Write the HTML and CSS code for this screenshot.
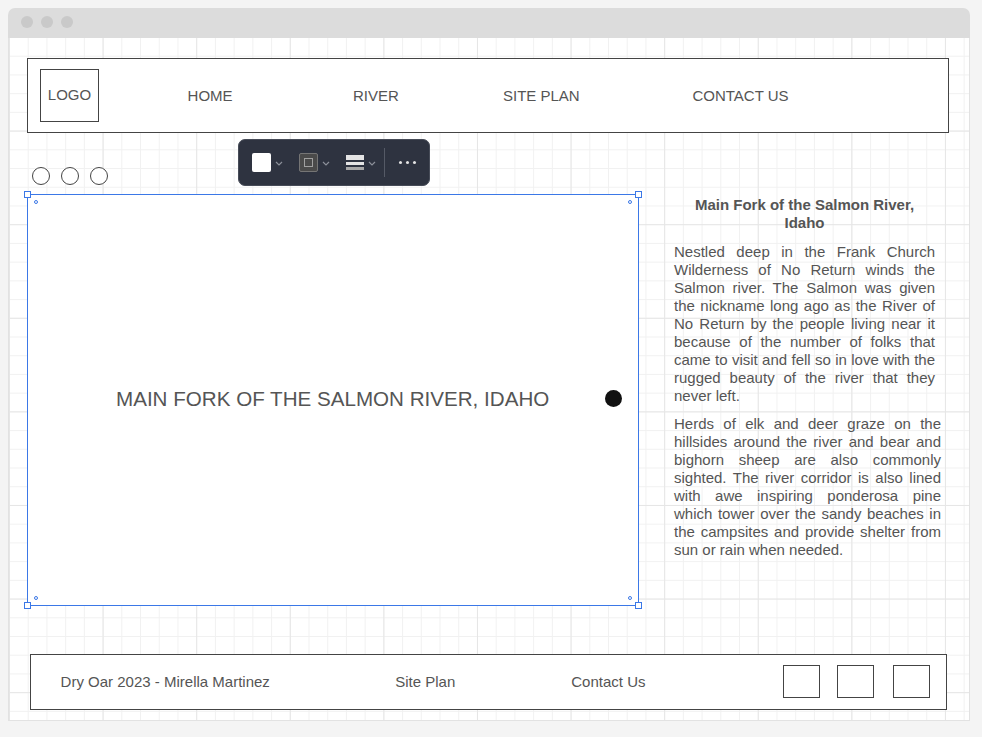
FILE: index.html
```html
<!DOCTYPE html>
<html lang="en">
<head>
    <meta charset="UTF-8">
    <title>Dry Oar - River</title>
    <link rel="stylesheet" href="styles.css">
</head>
<body>
<div class="window">
    <div class="titlebar">
        <span class="light"></span>
        <span class="light"></span>
        <span class="light"></span>
    </div>
    <div class="canvas">
        <header class="site-header">
            <div class="logo">LOGO</div>
            <nav class="nav">
                <a>HOME</a>
                <a>RIVER</a>
                <a>SITE PLAN</a>
                <a>CONTACT US</a>
            </nav>
        </header>

        <!-- Плавающая панель редактора -->
        <div class="toolbar">
            <span class="swatch"></span>
            <svg class="chev" width="8" height="5" viewBox="0 0 8 5"><path d="M1 1l3 3 3-3"/></svg>
            <span class="stroke-swatch"><span></span></span>
            <svg class="chev" width="8" height="5" viewBox="0 0 8 5"><path d="M1 1l3 3 3-3"/></svg>
            <span class="weight"><i></i><i></i><i></i></span>
            <svg class="chev" width="8" height="5" viewBox="0 0 8 5"><path d="M1 1l3 3 3-3"/></svg>
            <span class="divider"></span>
            <span class="more"><i></i><i></i><i></i></span>
        </div>

        <main class="content">
            <section class="slider">
                <div class="dots">
                    <span class="dot"></span>
                    <span class="dot"></span>
                    <span class="dot"></span>
                </div>
                <div class="hero">
                    <h1>MAIN FORK OF THE SALMON RIVER, IDAHO</h1>
                    <span class="hero-knob"></span>
                    <span class="handle tl"></span>
                    <span class="handle tr"></span>
                    <span class="handle bl"></span>
                    <span class="handle br"></span>
                    <span class="radius r-tl"></span>
                    <span class="radius r-tr"></span>
                    <span class="radius r-bl"></span>
                    <span class="radius r-br"></span>
                </div>
            </section>
            <article class="story">
                <h2>Main Fork of the Salmon River, Idaho</h2>
                <p class="first">Nestled deep in the Frank Church Wilderness of No Return winds the Salmon river. The Salmon was given the nickname long ago as the River of No Return by the people living near it because of the number of folks that came to visit and fell so in love with the rugged beauty of the river that they never left.</p>
                <p class="second">Herds of elk and deer graze on the hillsides around the river and bear and bighorn sheep are also commonly sighted. The river corridor is also lined with awe inspiring ponderosa pine which tower over the sandy beaches in the campsites and provide shelter from sun or rain when needed.</p>
            </article>
        </main>

        <footer class="site-footer">
            <span class="credit">Dry Oar 2023 - Mirella Martinez</span>
            <a class="foot-plan">Site Plan</a>
            <a class="foot-contact">Contact Us</a>
            <div class="socials">
                <span></span>
                <span></span>
                <span></span>
            </div>
        </footer>
    </div>
</div>
</body>
</html>
```

FILE: styles.css
```css
*, *::before, *::after {
    box-sizing: border-box;
    margin: 0;
    padding: 0;
}
body {
    font-family: 'Liberation Sans', Arial, sans-serif;
    background: #f4f4f4;
    color: #555;
    padding: 8px 12px 0 8px;
    height: 737px;
    overflow: hidden;
}
.window {
    width: 962px;
    height: 713px;
    border-radius: 7px 7px 0 0;
    overflow: hidden;
    display: flex;
    flex-direction: column;
    position: relative;
}
.titlebar {
    height: 30px;
    flex: none;
    background: #dcdcdc;
    display: flex;
    align-items: center;
    gap: 8px;
    padding: 0 0 2px 13px;
}
.light {
    width: 12px;
    height: 12px;
    border-radius: 50%;
    background: #c9c9c9;
}
.canvas {
    flex: 1;
    border: 1px solid #e2e2e2;
    border-top: none;
    padding: 20px 20px 0 18px;
    background-color: #fff;
    background-image:
        linear-gradient(to right, #e6e6e6 1px, transparent 1px),
        linear-gradient(to bottom, #e6e6e6 1px, transparent 1px),
        linear-gradient(to right, #f1f1f1 1px, transparent 1px),
        linear-gradient(to bottom, #f1f1f1 1px, transparent 1px);
    background-size: 93.6px 93.6px, 93.6px 93.6px, 18.72px 18.72px, 18.72px 18.72px;
    background-position: 0 -1px, 0 -1px, 0 -1px, 0 -1px;
    position: relative;
}
.site-header {
    width: 922px;
    height: 75px;
    border: 1px solid #444;
    background: #fff;
    display: flex;
    align-items: center;
    padding-left: 12px;
}
.logo {
    width: 59px;
    height: 53px;
    border: 1px solid #444;
    font-size: 15px;
    line-height: 49px;
    text-align: center;
}
.nav {
    margin-left: 88.6px;
    display: grid;
    grid-template-columns: 165.4px 150px 189.5px auto;
    font-size: 15px;
    line-height: 18px;
}
.toolbar {
    position: absolute;
    left: 229px;
    top: 101px;
    width: 192px;
    height: 47px;
    background: #2e3340;
    border: 1px solid #474c58;
    border-radius: 7px;
    display: flex;
    align-items: center;
    padding-left: 13px;
}
.swatch {
    width: 19px;
    height: 19px;
    background: #fff;
    border-radius: 2px;
}
.chev {
    fill: none;
    stroke: #8b8f99;
    stroke-width: 1.2;
    margin: 1px 0 0 4px;
}
.stroke-swatch {
    width: 19px;
    height: 19px;
    margin-left: 16px;
    background: #4a4a4a;
    border: 1px solid #757575;
    border-radius: 2px;
    display: flex;
    align-items: center;
    justify-content: center;
}
.stroke-swatch span {
    width: 9px;
    height: 9px;
    border: 1px solid #a0a0a0;
}
.weight {
    width: 18px;
    margin-left: 16px;
    display: flex;
    flex-direction: column;
    gap: 2px;
}
.weight i {
    display: block;
    background: #e4e4e4;
}
.weight i:nth-child(1) { height: 5px; }
.weight i:nth-child(2) { height: 3px; }
.weight i:nth-child(3) { height: 3px; background: #a8a8a8; }
.divider {
    width: 1px;
    height: 29px;
    margin-left: 8px;
    background: #555a66;
}
.more {
    display: flex;
    gap: 4px;
    margin-left: 14px;
}
.more i {
    width: 3px;
    height: 3px;
    border-radius: 50%;
    background: #e4e4e4;
}
.content {
    display: flex;
    margin-top: 34px;
}
.slider {
    width: 612px;
    flex: none;
}
.dots {
    display: flex;
    gap: 11px;
    padding-left: 5px;
    height: 27px;
}
.dot {
    width: 18px;
    height: 18px;
    border: 1px solid #444;
    border-radius: 50%;
    background: #fff;
}
.hero {
    height: 412px;
    background: #fff;
    border: 1px solid #3b78e7;
    display: flex;
    align-items: center;
    justify-content: space-between;
    padding: 0 16px 2px 88px;
    position: relative;
}
.hero h1 {
    font-size: 20.6px;
    font-weight: 400;
    line-height: 24px;
}
.hero-knob {
    width: 17px;
    height: 17px;
    margin-bottom: 1px;
    border-radius: 50%;
    background: #111;
}
.handle {
    position: absolute;
    width: 7px;
    height: 7px;
    background: #fff;
    border: 1px solid #3b78e7;
}
.handle.tl { left: -4px; top: -4px; }
.handle.tr { right: -4px; top: -4px; }
.handle.bl { left: -4px; bottom: -4px; }
.handle.br { right: -4px; bottom: -4px; }
.radius {
    position: absolute;
    width: 4px;
    height: 4px;
    background: #fff;
    border: 1px solid #3b78e7;
    border-radius: 50%;
}
.r-tl { left: 6px; top: 5px; }
.r-tr { right: 6px; top: 5px; }
.r-bl { left: 6px; bottom: 5px; }
.r-br { right: 6px; bottom: 5px; }
.story {
    margin-left: 35px;
    width: 267px;
    padding-top: 29px;
    font-size: 15px;
    line-height: 18px;
}
.story h2 {
    width: 261px;
    font-size: 15px;
    line-height: 18px;
    font-weight: 700;
    text-align: center;
    margin-bottom: 11px;
}
.story p {
    text-align: justify;
}
.story .first {
    width: 261px;
}
.story .second {
    margin-top: 10px;
}
.site-footer {
    width: 917px;
    height: 56px;
    margin: 48px 0 0 3px;
    border: 1px solid #444;
    background: #fff;
    display: flex;
    align-items: center;
    font-size: 15px;
    line-height: 18px;
    padding-left: 29.6px;
}
.foot-plan {
    margin-left: 125.4px;
}
.foot-contact {
    margin-left: 116px;
}
.socials {
    display: flex;
    margin-left: auto;
    margin-right: 16px;
    margin-bottom: 1px;
}
.socials span {
    width: 37px;
    height: 33px;
    border: 1px solid #444;
    margin-left: 17px;
}
.socials span:last-child {
    margin-left: 19px;
}
```
